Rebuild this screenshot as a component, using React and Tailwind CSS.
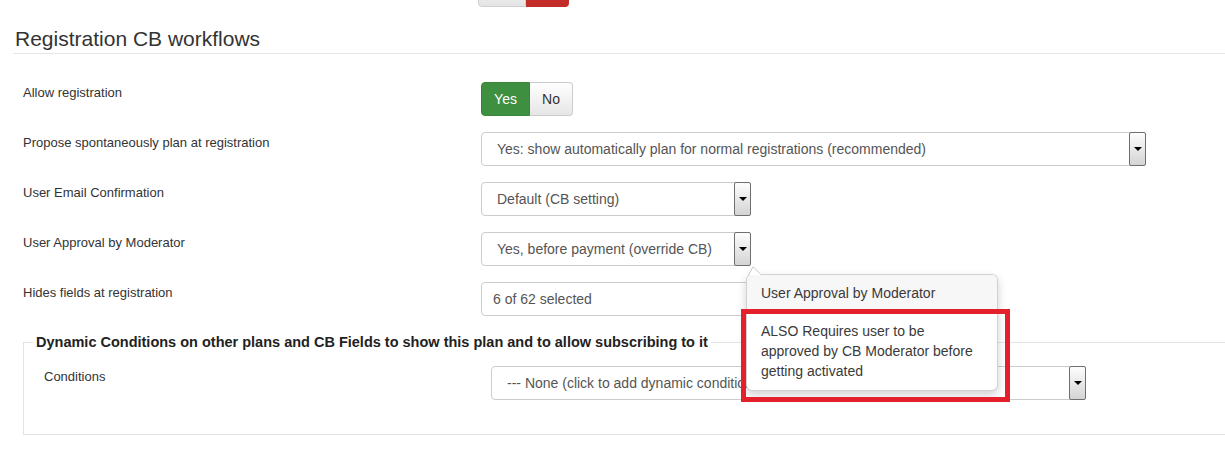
import React from 'react';

const rows = [
  { label: 'Allow registration', kind: 'toggle' },
  { label: 'Propose spontaneously plan at registration', kind: 'select', width: 'w-[665px]', value: 'Yes: show automatically plan for normal registrations (recommended)' },
  { label: 'User Email Confirmation', kind: 'select', width: 'w-[270px]', value: 'Default (CB setting)' },
  { label: 'User Approval by Moderator', kind: 'select', width: 'w-[270px]', value: 'Yes, before payment (override CB)' },
  { label: 'Hides fields at registration', kind: 'input', value: '6 of 62 selected' },
];

function ArrowButton() {
  return (
    <div className="w-[17px] -my-px -mr-px flex items-center justify-center rounded-[2px] border border-[#6f6f6f] bg-linear-to-b from-[#fdfdfd] to-[#d4d4d4]">
      <div className="h-0 w-0 border-l-[4px] border-r-[4px] border-t-[4px] border-l-transparent border-r-transparent border-t-black" />
    </div>
  );
}

function Select({ width, value }) {
  return (
    <div className={`${width} flex h-[34px] items-stretch rounded-[4px] border border-[#cccccc] bg-white`}>
      <div className="flex flex-1 items-center overflow-hidden whitespace-nowrap pl-[15px] text-[14px] text-[#555]">{value}</div>
      <ArrowButton />
    </div>
  );
}

function Toggle() {
  return (
    <div className="flex h-[34px] text-[14px]">
      <div className="flex w-[49px] items-center justify-center rounded-l-[4px] border border-[#3a853a] bg-[#3f8f40] text-white">Yes</div>
      <div className="flex w-[43px] items-center justify-center rounded-r-[4px] border border-l-0 border-[#cccccc] bg-linear-to-b from-white to-[#e6e6e6] text-[#333]">No</div>
    </div>
  );
}

export default function App() {
  return (
    <div className="relative h-[459px] w-[1225px] overflow-hidden bg-white font-['Liberation_Sans',Arial,sans-serif] text-[#333]">
      {/* bottom of previous section's toggle */}
      <div className="h-[7px] overflow-hidden pl-[478px]">
        <div className="-mt-[27px] flex h-[34px]">
          <div className="w-[48px] rounded-l-[4px] border border-[#cfcfcf] bg-linear-to-b from-white to-[#e4e4e4]" />
          <div className="w-[43px] rounded-r-[4px] bg-[#c22d29]" />
        </div>
      </div>

      <div className="ml-[13px] mt-[20px] border-b border-[#e5e5e5] pb-[3px] pl-[2px]">
        <h2 className="text-[21px] leading-[23px]">Registration CB workflows</h2>
      </div>

      <div className="mt-[28px] pl-[23px]">
        {rows.map((r) => (
          <div key={r.label} className="flex h-[50px]">
            <div className="w-[458px] pt-[3px] text-[13px] leading-[15px]">{r.label}</div>
            {r.kind === 'toggle' && <Toggle />}
            {r.kind === 'select' && <Select width={r.width} value={r.value} />}
            {r.kind === 'input' && (
              <div className="flex h-[34px] w-[270px] items-center rounded-[4px] border border-[#cccccc] pl-[11px] text-[14px] text-[#555]">
                {r.value}
              </div>
            )}
          </div>
        ))}
      </div>

      <fieldset className="ml-[23px] mt-[2px] w-[1240px] border border-[#e3e3e3] px-[9px] pb-[34px]">
        <legend className="px-[3px] text-[14.5px] font-bold leading-[16px] text-[#222]">
          Dynamic Conditions on other plans and CB Fields to show this plan and to allow subscribing to it
        </legend>
        <div className="flex pl-[11px] pt-[16px]">
          <div className="w-[447px] pt-[3px] text-[13px] leading-[15px]">Conditions</div>
          <Select width="w-[595px]" value="--- None (click to add dynamic conditions) ---" />
        </div>
      </fieldset>

      {/* popover */}
      <div className="absolute left-[746px] top-[274px] w-[252px] rounded-[6px] border border-[rgba(0,0,0,0.18)] bg-white text-[14px] leading-[20px] text-[#3a3a3a] shadow-[0_4px_10px_rgba(0,0,0,0.18)]">
        <div className="rounded-t-[5px] border-b border-[#ebebeb] bg-[#f7f7f7] px-[14px] py-[8px]">User Approval by Moderator</div>
        <div className="px-[14px] py-[9px]">
          ALSO Requires user to be
          <br />
          approved by CB Moderator before
          <br />
          getting activated
        </div>
      </div>
      <svg className="absolute left-[748px] top-[266px]" width="15" height="10" viewBox="0 0 15 10">
        <polygon points="5,0.5 0,9 14,9" fill="white" />
        <polyline points="0.5,9 5,0.8 13.5,9" fill="none" stroke="rgba(0,0,0,0.22)" strokeWidth="1" />
      </svg>

      {/* annotation */}
      <div className="absolute left-[741px] top-[309px] h-[93px] w-[269px] border-[5px] border-[#e3202b]" />
    </div>
  );
}
